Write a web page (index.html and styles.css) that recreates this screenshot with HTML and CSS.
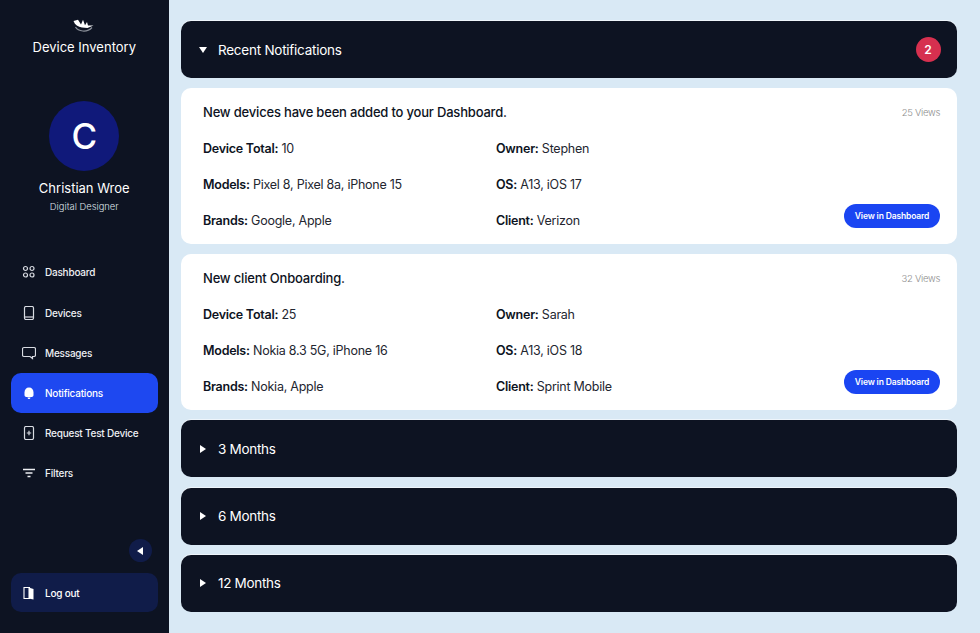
FILE: index.html
```html
<!DOCTYPE html>
<html lang="en">
<head>
<meta charset="utf-8">
<title>Device Inventory</title>
<link rel="stylesheet" href="styles.css">
</head>
<body>
<div class="app">
  <aside class="sidebar">
    <div class="brand">
      <svg class="logo" width="22" height="14" viewBox="0 0 22 14"><path d="M2.500 8C5 12.500 14 14 19 8.500" fill="none" stroke="#8a8f99" stroke-width="1.200"/><path d="M0.500 2L5 0.800L8 5.500L10 0.800L12 6.200L14 3L15 6.500L20.500 6.500L14.500 9L9 8.500C5 8 2 6 0.500 2Z" fill="#fff"/></svg>
      <div class="brand-name">Device Inventory</div>
    </div>
    <div class="profile">
      <div class="avatar">C</div>
      <div class="user-name">Christian Wroe</div>
      <div class="user-role">Digital Designer</div>
    </div>
    <nav class="nav">
      <a class="nav-item"><svg class="nav-icon" viewBox="0 0 14 14" fill="none" stroke="#d8dbe2" stroke-width="1.200"><circle cx="3.500" cy="3.500" r="2"/><circle cx="10" cy="3.500" r="2"/><circle cx="3.500" cy="10" r="2"/><circle cx="10" cy="10" r="2"/></svg>Dashboard</a>
      <a class="nav-item"><svg class="nav-icon" viewBox="0 0 14 14" fill="none" stroke="#d8dbe2" stroke-width="1.200"><rect x="2.500" y="0.500" width="9" height="13" rx="1.500"/><path d="M2.500 11h9"/></svg>Devices</a>
      <a class="nav-item"><svg class="nav-icon" viewBox="0 0 14 14" fill="none" stroke="#d8dbe2" stroke-width="1.200"><path d="M2 1.500h10a1.500 1.500 0 0 1 1.500 1.500v6a1.500 1.500 0 0 1-1.500 1.500h-1.500v2l-2.500-2H2A1.500 1.500 0 0 1 .5 9V3A1.500 1.500 0 0 1 2 1.500z"/></svg>Messages</a>
      <a class="nav-item active"><svg class="nav-icon" viewBox="0 0 14 14" fill="#fff"><path d="M7 1.500C4.200 1.500 2.500 3.500 2.500 6.500V9C2.500 10.500 3.500 11 5 11H9C10.500 11 11.500 10.500 11.500 9V6.500C11.500 3.500 9.800 1.500 7 1.500Z"/><path d="M5.500 11.500h3C8.300 12.700 7.700 13 7 13S5.700 12.700 5.500 11.500Z"/></svg>Notifications</a>
      <a class="nav-item"><svg class="nav-icon" viewBox="0 0 14 14" fill="none" stroke="#d8dbe2" stroke-width="1.200"><rect x="2.500" y="0.500" width="9" height="13" rx="1.500"/><path d="M7 4.800v4.400M4.800 7h4.400"/></svg>Request Test Device</a>
      <a class="nav-item"><svg class="nav-icon" viewBox="0 0 14 14" fill="none" stroke="#eceef2" stroke-width="1.300"><path d="M1 3.500h12M3.500 7h7M5.500 10.500h3"/></svg>Filters</a>
    </nav>
    <div class="sidebar-bottom">
      <button class="collapse"><span class="tri-left"></span></button>
      <a class="logout"><svg class="nav-icon" viewBox="0 0 14 14"><path d="M2 1.500h5.500v11H2z" fill="none" stroke="#fff" stroke-width="1.100"/><path d="M6.500 1.500L11.500 3v10.500L6.500 12.500z" fill="#fff"/></svg>Log out</a>
    </div>
  </aside>
  <main class="main">
    <section class="bar">
      <span class="tri-down"></span><span class="bar-title">Recent Notifications</span><span class="badge">2</span>
    </section>
    <article class="card">
      <div class="card-head"><h2 class="card-title">New devices have been added to your Dashboard.</h2><span class="views">25 Views</span></div>
      <div class="card-grid">
        <p class="field"><b>Device Total:</b> 10</p><p class="field"><b>Owner:</b> Stephen</p><span></span>
        <p class="field"><b>Models:</b> Pixel 8, Pixel 8a, iPhone 15</p><p class="field"><b>OS:</b> A13, iOS 17</p><span></span>
        <p class="field"><b>Brands:</b> Google, Apple</p><p class="field"><b>Client:</b> Verizon</p><button class="view-btn">View in Dashboard</button>
      </div>
    </article>
    <article class="card">
      <div class="card-head"><h2 class="card-title">New client Onboarding.</h2><span class="views">32 Views</span></div>
      <div class="card-grid">
        <p class="field"><b>Device Total:</b> 25</p><p class="field"><b>Owner:</b> Sarah</p><span></span>
        <p class="field"><b>Models:</b> Nokia 8.3 5G, iPhone 16</p><p class="field"><b>OS:</b> A13, iOS 18</p><span></span>
        <p class="field"><b>Brands:</b> Nokia, Apple</p><p class="field"><b>Client:</b> Sprint Mobile</p><button class="view-btn">View in Dashboard</button>
      </div>
    </article>
    <section class="bar"><span class="tri-right"></span><span class="bar-title">3 Months</span></section>
    <section class="bar"><span class="tri-right"></span><span class="bar-title">6 Months</span></section>
    <section class="bar"><span class="tri-right"></span><span class="bar-title">12 Months</span></section>
  </main>
</div>
</body>
</html>
```
FILE: styles.css
```css
* { box-sizing: border-box; }
html, body { margin: 0; height: 100%; }
body { font-family: "Inter", "Liberation Sans", sans-serif; background: #d9e9f5; overflow: hidden; }
.app { display: flex; width: 980px; height: 633px; }
.sidebar { width: 169px; flex: none; background: #0d1322; color: #fff; display: flex; flex-direction: column; padding: 19px 11.5px 21px 11px; }
.brand { display: flex; flex-direction: column; align-items: center; }
.logo { display: block; }
.brand-name { font-size: 13px; line-height: 16px; margin-top: 6px; }
.profile { display: flex; flex-direction: column; align-items: center; margin-top: 46px; }
.avatar { width: 70px; height: 70px; border-radius: 50%; background: #10197a; font-size: 35px; font-weight: 500; line-height: 70px; text-align: center; }
.user-name { font-size: 13px; line-height: 18px; margin-top: 8px; }
.user-role { font-size: 9.400px; font-weight: 300; line-height: 12px; margin-top: 4px; color: #dfe2e8; }
.nav { display: flex; flex-direction: column; margin-top: 39.400px; }
.nav-item { height: 40.200px; display: flex; align-items: center; gap: 9px; padding-left: 11px; font-size: 10px; font-weight: 500; letter-spacing: -0.220px; border-radius: 10px; color: #eef0f4; }
.nav-item.active { background: #1e48f0; color: #fff; }
.nav-icon { width: 14px; height: 14px; flex: none; display: block; }
.sidebar-bottom { margin-top: auto; display: flex; flex-direction: column; }
.collapse { align-self: flex-end; width: 23px; height: 23px; margin-right: 6px; border: 0; border-radius: 50%; background: #101c49; display: flex; align-items: center; justify-content: center; padding: 0; }
.tri-left { width: 0; height: 0; border-style: solid; border-width: 4px 6px 4px 0; border-color: transparent #fff transparent transparent; }
.logout { height: 39px; margin-top: 11px; display: flex; align-items: center; gap: 9px; padding-left: 11px; font-size: 10px; font-weight: 500; letter-spacing: -0.220px; border-radius: 10px; background: #101c49; color: #fff; }
.main { flex: 1; display: flex; flex-direction: column; gap: 10.150px; padding: 21px 23px 0 12px; }
.bar { height: 57px; flex: none; background: #0d1322; color: #fff; border-radius: 10px; display: flex; align-items: center; padding: 0 16.500px 0 18px; box-shadow: 0 -1px 0 #eef5fb; }
.bar-title { font-size: 13.500px; letter-spacing: -0.300px; margin-left: 12px; }
.tri-down + .bar-title { margin-left: 11.500px; letter-spacing: -0.250px; }
.tri-down { width: 0; height: 0; border-style: solid; border-width: 6.500px 4px 0 4px; border-color: #fff transparent transparent transparent; margin-left: -0.500px; }
.tri-right { width: 0; height: 0; margin-left: 1px; border-style: solid; border-width: 4px 0 4px 6.500px; border-color: transparent transparent transparent #fff; }
.badge { margin-left: auto; width: 25px; height: 25px; border-radius: 50%; background: #d6304f; font-size: 12px; font-weight: 600; display: flex; align-items: center; justify-content: center; }
.card { height: 156px; flex: none; background: #fff; border-radius: 10px; padding: 15px 17px 16px 22px; color: #0d1322; }
.card-head { display: flex; justify-content: space-between; align-items: center; height: 18px; }
.card-title { margin: 0; font-size: 13px; line-height: 18px; font-weight: 500; letter-spacing: -0.190px; }
.views { font-size: 9.500px; font-weight: 300; letter-spacing: -0.300px; color: #8e8e8e; }
.card-grid { display: grid; grid-template-columns: 293px 1fr auto; grid-auto-rows: 36px; margin-top: 10px; align-items: center; }
.field { margin: 0; font-size: 12.500px; line-height: 18px; letter-spacing: -0.250px; color: #23262f; }
.field b { font-weight: 600; color: #0d1322; }
.view-btn { width: 96px; height: 24px; border: 0; border-radius: 12px; background: #1a45f2; color: #fff; font: 600 8.500px "Inter", "Liberation Sans", sans-serif; letter-spacing: -0.150px; padding: 0; margin-top: -10px; }
```
